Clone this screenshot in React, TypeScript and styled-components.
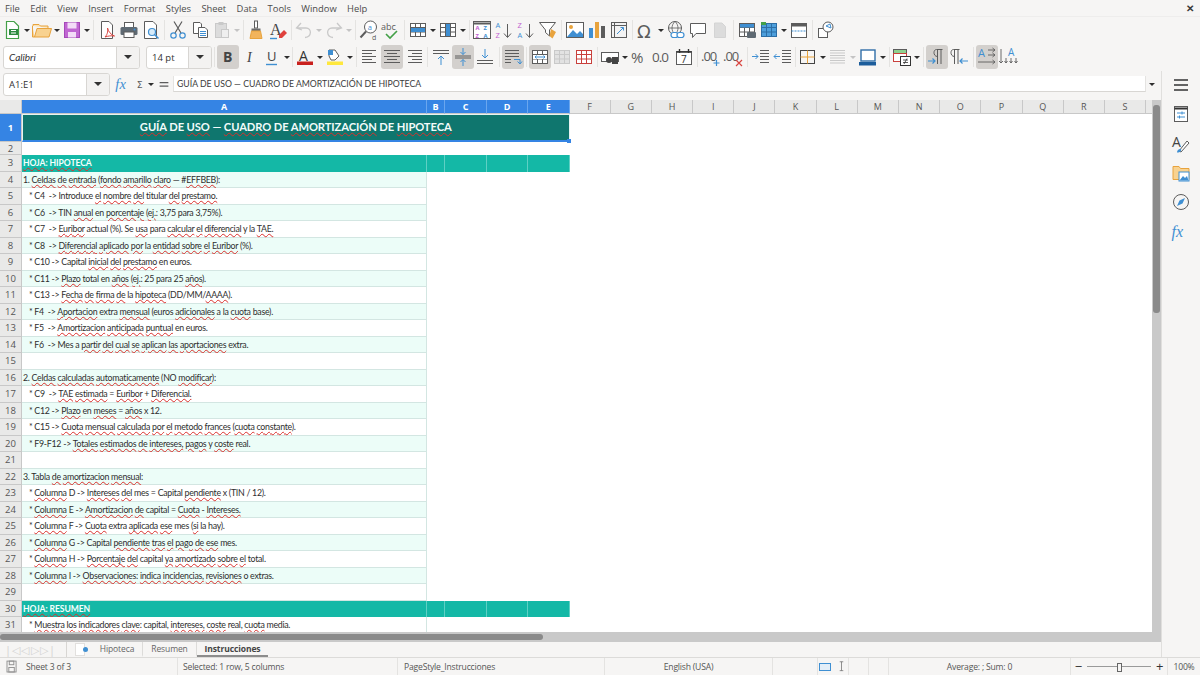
import { FC, ReactNode } from "react";
import styled, { createGlobalStyle } from "styled-components";

const BLUE = "#3f8fd2";
const ORANGE = "#e8a33d";
const GREY = "#5c5c5c";
const FADE = "#c9c9c9";

const lines = (x1: number, x2: number, ys: number[], color = GREY) =>
  ys.map((y) => <path key={y} d={`M${x1} ${y}H${x2}`} stroke={color} />);

const Table: FC<{ fill?: string; stroke?: string }> = ({ fill = "#fff", stroke = GREY }) => (
  <g stroke={stroke} fill="none">
    <rect x="3.5" y="4.5" width="15" height="13" fill={fill} />
    <path d="M3.5 8.5H18.5M3.5 13H18.5M8.5 4.5V17.5M13.5 4.5V17.5" />
  </g>
);

const Pilcrow: FC<{ x: number }> = ({ x }) => (
  <g fill="none" stroke={GREY}>
    <path d={`M${x + 3.5} 3.5V18M${x + 7} 3.5V18M${x + 8.5} 3.5H${x + 2.5}C${x - 1} 3.5 ${x - 1} 10.5 ${x + 3.5} 10.5`} />
  </g>
);

const icons: Record<string, ReactNode> = {
  new: (
    <g>
      <path d="M5.5 2.5H13L17.5 7V19.5H5.5Z" fill="#fff" stroke="#43a047" strokeWidth="1.2" />
      <rect x="8" y="10" width="9" height="6" fill="#2e8b40" />
      <path d="M10 11.5h5M10 14h5" stroke="#fff" />
    </g>
  ),
  open: (
    <g>
      <path d="M1.5 7V18H18L20.5 9.5H6L3.5 18" fill="#f8d290" stroke={ORANGE} />
      <path d="M2 7V5.5H8L9.5 7H17V9" fill="#fbe3b5" stroke={ORANGE} />
    </g>
  ),
  save: (
    <g>
      <rect x="3.5" y="3.5" width="15" height="15" fill="#c066d2" stroke="#a548b8" />
      <rect x="6.5" y="3.5" width="9" height="6" fill="#f3dcf7" />
      <rect x="7" y="13" width="8" height="5.5" fill="#f3dcf7" />
    </g>
  ),
  pdf: (
    <g>
      <path d="M5.5 2.5H13L16.5 6V19.5H5.5Z" fill="#fff" stroke={GREY} />
      <path d="M9 18C12 15 12 11 11.5 9C12 12 15 16 18.5 17C15 16.5 12 17 9 18Z" fill="#fff" stroke="#d9443f" />
    </g>
  ),
  print: (
    <g>
      <rect x="6.5" y="3.5" width="9" height="5" fill="#fff" stroke={GREY} />
      <rect x="2.5" y="8" width="17" height="8" rx="1.5" fill="#5f6a73" />
      <rect x="6" y="13" width="10" height="5.5" fill="#fff" stroke={GREY} />
      <circle cx="16.5" cy="10.5" r="1" fill={BLUE} />
    </g>
  ),
  preview: (
    <g>
      <path d="M4.5 2.5H13L16.5 6V19.5H4.5Z" fill="#fff" stroke={GREY} />
      <circle cx="12" cy="13" r="3.5" fill="#d8ecfa" stroke={BLUE} strokeWidth="1.2" />
      <path d="M14.5 15.5L18.5 19.5" stroke={BLUE} strokeWidth="1.6" />
    </g>
  ),
  cut: (
    <g fill="none">
      <path d="M7 2.5L14 14M15 2.5L8 14" stroke={GREY} strokeWidth="1.2" />
      <circle cx="6.5" cy="16.5" r="2.7" stroke={BLUE} strokeWidth="1.2" />
      <circle cx="15.5" cy="16.5" r="2.7" stroke={BLUE} strokeWidth="1.2" />
    </g>
  ),
  copy: (
    <g>
      <path d="M4.5 3.5H11L12.5 5V14.5H4.5Z" fill="#fff" stroke={GREY} />
      <path d="M9.5 8.5H16L18.5 11V18.5H9.5Z" fill="#fff" stroke={GREY} />
      {lines(11, 17, [12.5, 14.5, 16.5], BLUE)}
    </g>
  ),
  paste: (
    <g>
      <rect x="4.5" y="4.5" width="11" height="14" fill="#dcdcdc" stroke={FADE} />
      <rect x="7.5" y="3" width="5" height="3" fill={FADE} />
      <rect x="10.5" y="10.5" width="7" height="8" fill="#efefef" stroke={FADE} />
    </g>
  ),
  clone: (
    <g>
      <rect x="9.5" y="2" width="3" height="7" fill="#fff" stroke={GREY} />
      <path d="M6.5 9.5H15.5V12H6.5Z" fill="#6d6d6d" />
      <path d="M6.5 12H15.5L17 19.5H5Z" fill="#f2b45c" stroke={ORANGE} />
    </g>
  ),
  clear: (
    <g>
      <text x="3" y="16" fontSize="16" fontFamily="'Liberation Serif', serif" fill="#444">
        A
      </text>
      <path d="M3 19.5H10" stroke={BLUE} strokeWidth="1.4" />
      <path d="M12 16L17 11L20 14L15 19H12Z" fill="#e0413c" />
    </g>
  ),
  undo: <path d="M8 4L3.5 9L9 11M4 9H13C19 9 19 18 12 18.5" fill="none" stroke={FADE} strokeWidth="1.3" />,
  redo: <path d="M14 4L18.5 9L13 11M18 9H9C3 9 3 18 10 18.5" fill="none" stroke={FADE} strokeWidth="1.3" />,
  find: (
    <g>
      <circle cx="12.5" cy="8" r="6" fill="#fff" stroke={GREY} />
      <path d="M8 12.5L2.5 18.5" stroke={GREY} strokeWidth="2" />
      <text x="9.7" y="10.5" fontSize="7.5" fontFamily="'Open Sans', sans-serif" fill={BLUE}>
        a
      </text>
      <text x="14" y="20.5" fontSize="7" fontFamily="'Open Sans', sans-serif" fill={GREY}>
        d
      </text>
    </g>
  ),
  spell: (
    <g>
      <text x="1" y="10.5" fontSize="9" fontFamily="'Open Sans', sans-serif" fill={GREY}>
        abc
      </text>
      <path d="M6 15L10 19L17 12" fill="none" stroke="#43a047" strokeWidth="1.6" />
    </g>
  ),
  rows: (
    <g>
      <Table fill="#fff" />
      <rect x="4" y="9" width="14" height="4" fill={BLUE} />
    </g>
  ),
  cols: (
    <g>
      <Table fill="#fff" />
      <rect x="9" y="5" width="4" height="12" fill={BLUE} />
    </g>
  ),
  sort: (
    <g fontSize="5.8" fontWeight="700" fontFamily="'Open Sans', sans-serif">
      <rect x="2.5" y="2.5" width="17" height="17" fill="#fff" stroke={GREY} />
      <path d="M2.5 4.5H19.5" stroke={GREY} strokeWidth="2" />
      <text x="4.5" y="11" fill="#c060d0">
        A
      </text>
      <text x="12.5" y="11" fill={BLUE}>
        Z
      </text>
      <text x="4.5" y="18.5" fill="#c060d0">
        Z
      </text>
      <text x="12.5" y="18.5" fill={BLUE}>
        A
      </text>
    </g>
  ),
  asc: (
    <g fontSize="7.5" fontFamily="'Open Sans', sans-serif">
      <text x="2.5" y="9" fill={BLUE}>
        A
      </text>
      <text x="2.5" y="19" fill="#c060d0">
        Z
      </text>
      <path d="M14.5 5V18M11 14.5L14.5 18.5L18 14.5" fill="none" stroke={GREY} />
    </g>
  ),
  desc: (
    <g fontSize="7.5" fontFamily="'Open Sans', sans-serif">
      <text x="2.5" y="9" fill="#c060d0">
        Z
      </text>
      <text x="2.5" y="19" fill={BLUE}>
        A
      </text>
      <path d="M14.5 5V18M11 14.5L14.5 18.5L18 14.5" fill="none" stroke={GREY} />
    </g>
  ),
  filter: (
    <g>
      <path d="M2.5 3.5H18.5L12.5 11V17L8.5 13.5V11Z" fill="#fff" stroke={GREY} />
      <path d="M14 10L19 13L15.5 19.5L12.5 17Z" fill={ORANGE} />
    </g>
  ),
  image: (
    <g>
      <rect x="2.5" y="3.5" width="17" height="15" fill="#fff" stroke={GREY} />
      <circle cx="7" cy="8" r="2" fill={ORANGE} />
      <path d="M3 18L9 11L13 15L16 12L19 15V18Z" fill={BLUE} />
    </g>
  ),
  chart: (
    <g>
      <rect x="3" y="9" width="4" height="10" fill={BLUE} />
      <rect x="9" y="3" width="4" height="16" fill={ORANGE} />
      <rect x="15" y="7" width="4" height="12" fill={GREY} />
    </g>
  ),
  pivot: (
    <g>
      <rect x="3.5" y="3.5" width="15" height="15" fill="#f3f3f3" stroke={GREY} />
      <path d="M3.5 6.5H18.5M6.5 3.5V18.5" stroke={GREY} />
      <path d="M9 15L15 9M12.5 8.5H15.5V11.5" fill="none" stroke={BLUE} />
    </g>
  ),
  omega: (
    <text x="2" y="18.5" fontSize="18" fontFamily="'DejaVu Sans', sans-serif" fill={GREY}>
      Ω
    </text>
  ),
  link: (
    <g fill="none">
      <circle cx="10" cy="9" r="6.5" stroke={GREY} />
      <path d="M3.5 9H16.5M10 2.5C6 6 6 12 10 15.5M10 2.5C14 6 14 12 10 15.5" stroke={GREY} strokeWidth=".8" />
      <rect x="6" y="13.5" width="7" height="5" rx="2.5" fill="#fff" stroke={BLUE} strokeWidth="1.2" />
      <rect x="12" y="13.5" width="7" height="5" rx="2.5" fill="#fff" stroke={BLUE} strokeWidth="1.2" />
    </g>
  ),
  comment: <path d="M3.5 4.5H18.5V14.5H9L5.5 18.5V14.5H3.5Z" fill="#fff" stroke={GREY} />,
  note: <path d="M5.5 4H13L16.5 7.5V18.5H5.5Z" fill="#dcdcdc" stroke="#d4d4d4" />,
  printarea: (
    <g>
      <Table fill="#fff" />
      <rect x="4" y="5" width="14" height="3.5" fill={BLUE} />
      <rect x="11" y="13" width="9" height="6" rx="1" fill="#5f6a73" />
    </g>
  ),
  freeze: (
    <g>
      <Table fill="#4d9fdc" stroke="#2d6ea5" />
      <rect x="3" y="3" width="5" height="3" fill="#43a047" />
    </g>
  ),
  split: (
    <g>
      <rect x="3.5" y="4.5" width="15" height="14" fill="#fff" stroke={GREY} />
      <rect x="3.5" y="4.5" width="15" height="3" fill={GREY} />
      <path d="M3.5 12H18.5" stroke={BLUE} strokeDasharray="2 1" />
    </g>
  ),
  shapes: (
    <g fill="#fff" stroke={GREY}>
      <rect x="3.5" y="9.5" width="9" height="9" />
      <circle cx="13" cy="8" r="5" />
      <path d="M11 7L15 5L16 9Z" stroke={BLUE} />
    </g>
  ),
  bold: (
    <text x="6" y="16" fontSize="14" fontWeight="700" fontFamily="'Open Sans', sans-serif" fill="#444">
      B
    </text>
  ),
  italic: (
    <text x="8" y="16" fontSize="14" fontStyle="italic" fontFamily="'Liberation Serif', serif" fill="#444">
      I
    </text>
  ),
  under: (
    <g>
      <text x="6" y="15" fontSize="13" fontFamily="'Open Sans', sans-serif" fill="#444">
        U
      </text>
      <path d="M5 18.5H16" stroke={BLUE} strokeWidth="1.4" />
    </g>
  ),
  color: (
    <g>
      <text x="5" y="14.5" fontSize="14" fontFamily="'Open Sans', sans-serif" fill="#333">
        A
      </text>
      <rect x="3" y="15.5" width="16" height="3.5" fill="#c9211e" />
    </g>
  ),
  bg: (
    <g>
      <path d="M5 4H11L15 10L11 14H7L5 10Z" fill="#fff" stroke={GREY} />
      <rect x="4" y="4" width="5" height="5" fill={BLUE} />
      <rect x="3" y="15.5" width="16" height="3.5" fill="#ffe83d" />
    </g>
  ),
  left: <g>{[4.5, 7.5, 10.5, 13.5, 16.5].map((y, i) => <path key={y} d={i % 2 ? `M3 ${y}H13` : `M3 ${y}H17`} stroke={GREY} />)}</g>,
  center: <g>{[4.5, 7.5, 10.5, 13.5, 16.5].map((y, i) => <path key={y} d={i % 2 ? `M6 ${y}H16` : `M3 ${y}H19`} stroke={GREY} />)}</g>,
  right: <g>{[4.5, 7.5, 10.5, 13.5, 16.5].map((y, i) => <path key={y} d={i % 2 ? `M9 ${y}H19` : `M5 ${y}H19`} stroke={GREY} />)}</g>,
  top: (
    <g>
      {lines(3, 19, [4.5, 7.5])}
      <path d="M11 19V10M8 13L11 10L14 13" fill="none" stroke={BLUE} />
    </g>
  ),
  middle: (
    <g>
      {lines(3, 19, [10, 12])}
      <path d="M11 2V8.5M8.5 6L11 8.5L13.5 6M11 20V13.5M8.5 16L11 13.5L13.5 16" fill="none" stroke={BLUE} />
    </g>
  ),
  bottom: (
    <g>
      {lines(3, 19, [14.5, 17.5])}
      <path d="M11 3V12M8 9L11 12L14 9" fill="none" stroke={BLUE} />
    </g>
  ),
  wrap: (
    <g>
      {lines(3, 17, [4.5, 7.5, 10.5])}
      {lines(3, 9, [13.5, 16.5])}
      <path d="M12 13.5H18V17.5M15.5 15.5L18 18L20 15.5" fill="none" stroke={BLUE} />
    </g>
  ),
  merge: (
    <g>
      <Table fill="#fff" />
      <rect x="4" y="9" width="14" height="4" fill="#fff" />
      <path d="M6 11H16M7.5 9.5L6 11L7.5 12.5M14.5 9.5L16 11L14.5 12.5" fill="none" stroke={BLUE} />
    </g>
  ),
  mergeoff: <Table fill="#e2e2e2" stroke={FADE} />,
  unmerge: <Table fill="#fff" stroke="#c9403c" />,
  format: (
    <g>
      <rect x="2.5" y="6.5" width="17" height="9" fill="#fff" stroke={GREY} />
      <circle cx="10" cy="14" r="3" fill="#444" />
      <rect x="13" y="11" width="6" height="7" fill="#444" />
    </g>
  ),
  percent: (
    <text x="2" y="17" fontSize="15" fontFamily="'Open Sans', sans-serif" fill={GREY}>
      %
    </text>
  ),
  number: (
    <text x="1" y="16" fontSize="13.5" letterSpacing="-1" fontFamily="'Open Sans', sans-serif" fill={GREY}>
      0.0
    </text>
  ),
  date: (
    <g>
      <rect x="3.5" y="5.5" width="15" height="13" fill="#fff" stroke={GREY} />
      <path d="M3.5 6H18.5M6.5 3V7M15.5 3V7" stroke="#333" strokeWidth="1.4" />
      <text x="8" y="16.5" fontSize="10" fontFamily="'Open Sans', sans-serif" fill="#333">
        7
      </text>
    </g>
  ),
  adddec: (
    <g>
      <text x="1" y="15" fontSize="13" letterSpacing="-1" fontFamily="'Open Sans', sans-serif" fill={GREY}>
        .00
      </text>
      <path d="M16.5 14V20M13.5 17H19.5" stroke={BLUE} strokeWidth="1.2" />
    </g>
  ),
  deldec: (
    <g>
      <text x="1" y="15" fontSize="13" letterSpacing="-1" fontFamily="'Open Sans', sans-serif" fill={GREY}>
        .00
      </text>
      <path d="M14 14L20 20M20 14L14 20" stroke="#d9443f" strokeWidth="1.2" />
    </g>
  ),
  indent: (
    <g>
      {lines(10, 19, [4.5, 7.5, 10.5, 13.5, 16.5])}
      <path d="M2 10.5H8M5.5 8L8 10.5L5.5 13" fill="none" stroke={BLUE} />
    </g>
  ),
  outdent: (
    <g>
      {lines(10, 19, [4.5, 7.5, 10.5, 13.5, 16.5])}
      <path d="M8 10.5H2M4.5 8L2 10.5L4.5 13" fill="none" stroke={BLUE} />
    </g>
  ),
  border: (
    <g fill="none">
      <rect x="3.5" y="4.5" width="14" height="13" stroke="#444" />
      <path d="M10.5 4.5V17.5M3.5 11H17.5" stroke={ORANGE} />
    </g>
  ),
  bstyle: <g>{lines(3, 18, [4.5, 7, 9.5, 12, 14.5, 17], FADE)}</g>,
  bcolor: (
    <g>
      <rect x="4" y="4" width="14" height="11" fill="#fff" stroke="#2f6ea8" strokeWidth="1.4" />
      <rect x="2" y="16" width="17" height="3.5" fill="#1c5d9b" />
    </g>
  ),
  cond: (
    <g>
      <rect x="2.5" y="3.5" width="13" height="4" fill="#8fd18f" stroke={GREY} />
      <rect x="2.5" y="7.5" width="13" height="8" fill="#fff" stroke="#c9403c" />
      <rect x="9.5" y="10.5" width="10" height="9" fill="#fff" stroke="#333" />
      <path d="M12 14H17M12 16.5H17M13 18L16 12.5" stroke="#333" strokeWidth=".8" />
    </g>
  ),
  ltr: (
    <g>
      <Pilcrow x={8} />
      <path d="M2 15H9M6.5 12.5L9 15L6.5 17.5" fill="none" stroke={BLUE} strokeWidth="1.2" />
    </g>
  ),
  rtl: (
    <g>
      <Pilcrow x={3} />
      <path d="M12 15H20M14.5 12.5L12 15L14.5 17.5" fill="none" stroke={BLUE} strokeWidth="1.2" />
    </g>
  ),
  ahoriz: (
    <g>
      <text x="2" y="11" fontSize="11" fontFamily="'Open Sans', sans-serif" fill={BLUE}>
        A
      </text>
      <path d="M12 4H19M16.5 2L19 4L16.5 6M12 9H19M16.5 7L19 9L16.5 11M2 16H19M16.5 14L19 16L16.5 18" fill="none" stroke={GREY} strokeWidth=".9" />
    </g>
  ),
  avert: (
    <g>
      <text x="10" y="10" fontSize="10" fontFamily="'Open Sans', sans-serif" fill={BLUE}>
        A
      </text>
      <path d="M3 3V17M1 15L3 17L5 15M8 12V17M6.5 15L8 17L9.5 15M13 12V17M11.5 15L13 17L14.5 15M18 12V17M16.5 15L18 17L19.5 15" fill="none" stroke={GREY} strokeWidth=".9" />
    </g>
  ),
  fx: (
    <text x="1.5" y="17" fontSize="16" fontStyle="italic" fontFamily="'Liberation Serif', serif" fill={BLUE}>
      fx
    </text>
  ),
  sigma: (
    <text x="3" y="17.5" fontSize="17" fontFamily="'DejaVu Sans', sans-serif" fill={GREY}>
      Σ
    </text>
  ),
  equal: <path d="M5 9H17M5 14H17" stroke={GREY} strokeWidth="1.6" />,
  menu: <path d="M4 6H18M4 11H18M4 16H18" stroke="#333" strokeWidth="1.5" />,
  props: (
    <g>
      <rect x="4.5" y="3.5" width="13" height="15" fill="#fff" stroke={GREY} />
      <path d="M4.5 5.5H17.5" stroke="#333" strokeWidth="2" />
      <path d="M7 10H15M7 14H15M12 8.5V11.5M9.5 12.5V15.5" stroke={BLUE} />
    </g>
  ),
  styles: (
    <g>
      <text x="2" y="14" fontSize="14" fontFamily="'Open Sans', sans-serif" fill="#444">
        A
      </text>
      <path d="M9 18L17 8L19 10L11 19Z" fill="#fff" stroke={GREY} />
      <path d="M7 19.5C7 17 9 15.5 11 16C12 18 9 20 7 19.5Z" fill={BLUE} />
    </g>
  ),
  gallery: (
    <g>
      <path d="M3 4.5H9L10.5 6.5H19V17.5H3Z" fill="#f8d290" stroke={ORANGE} />
      <rect x="9" y="10" width="10" height="9" fill="#fff" stroke={BLUE} />
      <path d="M9.5 18.5L13 14L15 16L17 14L18.5 18.5Z" fill={BLUE} />
    </g>
  ),
  nav: (
    <g fill="none">
      <circle cx="11" cy="11" r="7.5" stroke={GREY} />
      <path d="M15 7L12.5 12.5L7 15L9.5 9.5Z" fill={BLUE} />
    </g>
  ),
  floppy: (
    <g fill="none" stroke="#8d8d8d">
      <rect x="5.5" y="4.5" width="10" height="12" />
      <rect x="8" y="4.5" width="5" height="4" />
      <rect x="7.5" y="11.5" width="6" height="5" />
    </g>
  ),
  cursor: <path d="M8 3H14M11 3V18M8 18H14" fill="none" stroke="#666" strokeWidth="1.2" />,
};

const Icon: FC<{ name: string; size?: number }> = ({ name, size = 22 }) => (
  <svg width={size} height={size} viewBox="0 0 22 22">
    {icons[name]}
  </svg>
);

const GlobalStyle = createGlobalStyle`
  html, body {
    margin: 0;
    padding: 0;
    background: #f6f5f4;
    overflow: hidden;
  }
  * {
    box-sizing: border-box;
  }
`;

const Window = styled.div`
  width: 1200px;
  height: 675px;
  display: flex;
  flex-direction: column;
  overflow: hidden;
  background: #f6f5f4;
  color: #4a4a4a;
  font-family: "Open Sans", "Noto Sans", sans-serif;
  font-size: 10px;
`;

const MenuBar = styled.div`
  height: 17px;
  display: flex;
  align-items: center;
  padding-left: 5px;
  gap: 10.4px;
  font-size: 9.4px;
  color: #4c4c4c;
  border-bottom: 1px solid #eeedec;
`;

const CloseX = styled.span`
  margin-left: auto;
  margin-right: 6px;
  font-size: 10px;
  font-weight: 700;
  color: #3a3a3a;
`;

const ToolRow = styled.div<{ $height: number; $left: number }>`
  height: ${(p) => p.$height}px;
  padding-left: ${(p) => p.$left}px;
  display: flex;
  align-items: center;
`;

const ToolButton = styled.div<{ $pressed?: boolean; $width?: number }>`
  width: ${(p) => p.$width ?? 22}px;
  height: 24px;
  flex: none;
  display: flex;
  align-items: center;
  justify-content: center;
  border-radius: 3px;
  background: ${(p) => (p.$pressed ? "#d3d0cd" : "transparent")};
`;

const Caret = styled.div<{ $faded?: boolean; $width?: number }>`
  width: ${(p) => p.$width ?? 8}px;
  flex: none;
  display: flex;
  justify-content: center;
  &::after {
    content: "";
    border-left: 3px solid transparent;
    border-right: 3px solid transparent;
    border-top: 3px solid ${(p) => (p.$faded ? "#c4c4c4" : "#2e2e2e")};
  }
`;

const Sep = styled.div<{ $width: number }>`
  width: ${(p) => p.$width}px;
  height: 20px;
  flex: none;
  display: flex;
  justify-content: center;
  &::after {
    content: "";
    width: 1px;
    background: #e4e3e1;
  }
`;

const Combo = styled.div<{ $width: number; $gap: number }>`
  width: ${(p) => p.$width}px;
  height: 23px;
  flex: none;
  margin-right: ${(p) => p.$gap}px;
  display: flex;
  background: #fff;
  border: 1px solid #d8d6d3;
  border-radius: 3px;
  overflow: hidden;
`;

const ComboText = styled.div<{ $italic?: boolean }>`
  flex: 1;
  display: flex;
  align-items: center;
  padding-left: 5px;
  font-family: ${(p) => (p.$italic ? "Lato" : "Open Sans")}, sans-serif;
  font-style: ${(p) => (p.$italic ? "italic" : "normal")};
  font-size: ${(p) => (p.$italic ? 10 : 9.5)}px;
  color: #333;
`;

const ComboArrow = styled.div`
  width: 23px;
  flex: none;
  display: flex;
  align-items: center;
  justify-content: center;
  background: #f3f2f1;
  border-left: 1px solid #d8d6d3;
  &::after {
    content: "";
    border-left: 4px solid transparent;
    border-right: 4px solid transparent;
    border-top: 4px solid #333;
  }
`;

const Workspace = styled.div`
  flex: 1;
  min-height: 0;
  display: flex;
`;

const MainColumn = styled.div`
  flex: 1;
  min-width: 0;
  display: flex;
  flex-direction: column;
`;

const FormulaBar = styled.div`
  height: 29px;
  flex: none;
  display: flex;
  align-items: center;
  padding: 0 3px 3px;
`;

const FormulaInput = styled.div`
  flex: 1;
  height: 16px;
  padding-left: 3px;
  display: flex;
  align-items: center;
  background: #fff;
  border-bottom: 1px solid #d8d6d3;
  border-left: 1px solid #e4e3e1;
  border-right: 1px solid #e4e3e1;
  font-family: Lato, sans-serif;
  font-size: 8.7px;
  color: #3c3c3c;
  white-space: nowrap;
`;

const GridArea = styled.div`
  flex: 1;
  min-height: 0;
  display: flex;
`;

const Sheet = styled.div`
  flex: 1;
  min-width: 0;
  overflow: hidden;
  background: #fff;
`;

const Row = styled.div<{ $height: number }>`
  height: ${(p) => p.$height}px;
  display: flex;
`;

const ColCell = styled.div<{ $width: number; $active?: boolean }>`
  width: ${(p) => p.$width}px;
  flex: none;
  display: flex;
  align-items: center;
  justify-content: center;
  font-size: 9px;
  font-weight: ${(p) => (p.$active ? 700 : 400)};
  color: ${(p) => (p.$active ? "#fff" : "#555")};
  background: ${(p) => (p.$active ? "#3584e4" : "#e9e9e8")};
  border-right: 1px solid ${(p) => (p.$active ? "#6aa6ee" : "#c8c8c8")};
  border-bottom: 1px solid #c8c8c8;
`;

const RowHead = styled.div<{ $active?: boolean }>`
  width: 22px;
  flex: none;
  display: flex;
  align-items: center;
  justify-content: center;
  font-size: 9.5px;
  font-weight: ${(p) => (p.$active ? 700 : 400)};
  color: ${(p) => (p.$active ? "#fff" : "#555")};
  background: ${(p) => (p.$active ? "#3584e4" : "#e9e9e8")};
  border-bottom: 1px solid #c8c8c8;
  border-right: 1px solid #c8c8c8;
`;

const TitleCell = styled.div`
  position: relative;
  width: 547.5px;
  flex: none;
  padding-bottom: 2px;
  display: flex;
  align-items: center;
  justify-content: center;
  background: #0f766e;
  border: 1px solid #e8f3f2;
  border-bottom: 2px solid #3584e4;
  font-family: Lato, sans-serif;
  font-weight: 700;
  font-size: 11.2px;
  letter-spacing: -0.1px;
  color: #f2fbfa;
`;

const Handle = styled.span`
  position: absolute;
  right: -2px;
  bottom: -3px;
  width: 4px;
  height: 4px;
  background: #3584e4;
`;

const BandCell = styled.div<{ $width: number }>`
  width: ${(p) => p.$width}px;
  flex: none;
  padding-left: 1px;
  display: flex;
  align-items: center;
  background: #14b8a6;
  border-right: 1px solid #5fd0c4;
  font-family: Lato, sans-serif;
  font-weight: 700;
  font-size: 8.6px;
  letter-spacing: -0.1px;
  color: #f4fffd;
  white-space: pre;
`;

const TextCell = styled.div<{ $tint: boolean }>`
  width: 405px;
  flex: none;
  padding-left: 1px;
  display: flex;
  align-items: center;
  background: ${(p) => (p.$tint ? "#ecfdf8" : "#fff")};
  border-bottom: 1px solid #d3e6e2;
  border-right: 1px solid #d3e6e2;
  font-family: Lato, sans-serif;
  font-size: 8.8px;
  letter-spacing: -0.28px;
  color: #2e2e2e;
  white-space: pre;
`;

const Spell = styled.span`
  text-decoration: underline wavy #d9302c;
  text-decoration-thickness: 0.7px;
  text-underline-offset: 0.5px;
`;

const VScroll = styled.div`
  width: 9px;
  flex: none;
  padding: 5px 1px 0;
  background: #c9c9c9;
`;

const VThumb = styled.div`
  height: 208px;
  background: #8a8a8a;
  border-radius: 3px;
`;

const HScroll = styled.div`
  height: 10px;
  flex: none;
  padding: 2px 0;
  background: #c9c9c9;
`;

const HThumb = styled.div`
  width: 543px;
  height: 6px;
  background: #8a8a8a;
  border-radius: 3px;
`;

const TabBar = styled.div`
  height: 15px;
  flex: none;
  display: flex;
  align-items: center;
  font-size: 8.5px;
  letter-spacing: -0.1px;
  color: #666;
`;

const NavArrows = styled.div`
  width: 62px;
  margin-left: 5px;
  flex: none;
  font-size: 11px;
  letter-spacing: 1.2px;
  white-space: nowrap;
  overflow: hidden;
  color: #d2d2d2;
  border-right: 1px solid #d8d6d3;
`;

const NewTab = styled.div`
  position: relative;
  width: 10px;
  height: 13px;
  margin: 0 7px 0 8px;
  flex: none;
  background: #fff;
  border: 1px solid #e2e0de;
  &::after {
    content: "";
    position: absolute;
    right: -4px;
    top: 3px;
    width: 5px;
    height: 5px;
    border-radius: 50%;
    background: ${BLUE};
  }
`;

const SheetTab = styled.div<{ $active?: boolean; $width: number; $divider?: boolean }>`
  width: ${(p) => p.$width}px;
  height: 15px;
  flex: none;
  display: flex;
  align-items: center;
  justify-content: center;
  font-weight: ${(p) => (p.$active ? 700 : 400)};
  color: ${(p) => (p.$active ? "#444" : "#666")};
  border-bottom: 2px solid ${(p) => (p.$active ? "#8c8c8c" : "transparent")};
  border-right: ${(p) => (p.$divider ? "1px solid #dcdbd9" : "none")};
`;

const Sidebar = styled.div`
  width: 39px;
  flex: none;
  padding-top: 3px;
  display: flex;
  flex-direction: column;
  align-items: center;
  gap: 7.3px;
  border-left: 1px solid #e0dfdd;
`;

const StatusBar = styled.div`
  height: 18px;
  flex: none;
  display: flex;
  align-items: center;
  font-size: 8.6px;
  letter-spacing: -0.2px;
  color: #555;
  border-top: 1px solid #dcdbd9;
`;

const StatusItem = styled.div<{ $width: number; $center?: boolean; $left?: number; $bare?: boolean }>`
  width: ${(p) => p.$width}px;
  height: 100%;
  flex: none;
  display: flex;
  align-items: center;
  gap: 4px;
  padding-left: ${(p) => p.$left ?? 0}px;
  justify-content: ${(p) => (p.$center ? "center" : "flex-start")};
  border-right: ${(p) => (p.$bare ? "none" : "1px solid #e4e3e1")};
  white-space: nowrap;
`;

const SelectMode = styled.span`
  width: 12px;
  height: 8px;
  background: #e3eef8;
  border: 1px solid ${BLUE};
`;

const ZoomTrack = styled.div`
  position: relative;
  width: 64px;
  height: 1px;
  margin: 0 1px;
  background: #9a9a9a;
  &::after {
    content: "";
    position: absolute;
    left: 30px;
    top: -3px;
    width: 3px;
    height: 7px;
    background: #f6f5f4;
    border: 1px solid #666;
  }
`;

const ZoomSign = styled.span`
  font-size: 13px;
  line-height: 1;
  color: #333;
`;

const renderTools = (items: string[]) =>
  items.map((item, i) => {
    if (item === "v") return <Caret key={i} />;
    if (item === "v-") return <Caret key={i} $faded />;
    if (item[0] === "|") return <Sep key={i} $width={Number(item.slice(1))} />;
    const pressed = item[0] === "*";
    return (
      <ToolButton key={i} $pressed={pressed}>
        <Icon name={pressed ? item.slice(1) : item} />
      </ToolButton>
    );
  });

const standardTools =
  "new v open v save v |5 pdf print preview |5 cut copy paste v- |4 clone clear |4 undo v- redo v- |5 find spell |5 rows v cols v |4 sort asc desc filter |5 image chart pivot |5 omega v link comment note |5 printarea freeze v split |5 shapes".split(" ");

const formatTools =
  "|5 *bold italic under v |3 color v bg v |5 left *center right |5 top *middle bottom |6 *wrap |5 *merge mergeoff unmerge |4 format v percent number date |5 adddec deldec |6 indent outdent |3 border v bstyle v- bcolor v |4 cond v |5 *ltr rtl |6 *ahoriz avert".split(" ");

// {word} marks a word with the red spell-check underline
const Marked: FC<{ text: string }> = ({ text }) => (
  <span>
    {text.split(/(\{[^}]*\})/).map((part, i) =>
      part[0] === "{" ? <Spell key={i}>{part.slice(1, -1)}</Spell> : part
    )}
  </span>
);

const rows: Record<number, string> = {
  4: "1. {Celdas} {de} {entrada} ({fondo} {amarillo} {claro} — #{EFFBEB}):",
  5: "   * C4  -> Introduce {el} {nombre} {del} titular {del} {prestamo.}",
  6: "   * C6  -> TIN {anual} en {porcentaje} ({ej.}: 3,75 para 3,75%).",
  7: "   * C7  -> {Euribor} actual (%). Se {usa} para {calcular} {el} {diferencial} y la {TAE.}",
  8: "   * C8  -> {Diferencial} {aplicado} {por} la {entidad} {sobre} {el} {Euribor} (%).",
  9: "   * C10 -> Capital {inicial} {del} {prestamo} en euros.",
  10: "   * C11 -> {Plazo} total en {años} ({ej.}: 25 para 25 {años}).",
  11: "   * C13 -> {Fecha} {de} {firma} {de} la {hipoteca} (DD/MM/{AAAA}).",
  12: "   * F4  -> {Aportacion} extra {mensual} (euros {adicionales} a la {cuota} base).",
  13: "   * F5  -> {Amortizacion} {anticipada} {puntual} en euros.",
  14: "   * F6  -> Mes a {partir} {del} {cual} {se} {aplican} {las} {aportaciones} extra.",
  15: "",
  16: "2. {Celdas} {calculadas} {automaticamente} (NO {modificar}):",
  17: "   * C9  -> {TAE} {estimada} = {Euribor} + {Diferencial.}",
  18: "   * C12 -> {Plazo} en {meses} = {años} x 12.",
  19: "   * C15 -> {Cuota} {mensual} {calculada} {por} {el} {metodo} {frances} ({cuota} {constante}).",
  20: "   * F9-F12 -> {Totales} {estimados} {de} {intereses,} {pagos} y {coste} real.",
  21: "",
  22: "3. Tabla {de} {amortizacion} {mensual}:",
  23: "   * {Columna} D -> {Intereses} {del} mes = Capital {pendiente} x (TIN / 12).",
  24: "   * {Columna} E -> {Amortizacion} {de} capital = {Cuota} - {Intereses.}",
  25: "   * {Columna} F -> {Cuota} extra {aplicada} {ese} mes ({si} la hay).",
  26: "   * {Columna} G -> Capital {pendiente} {tras} {el} {pago} {de} {ese} mes.",
  27: "   * {Columna} H -> {Porcentaje} {del} capital {ya} {amortizado} {sobre} {el} total.",
  28: "   * {Columna} I -> {Observaciones}: {indica} {incidencias,} {revisiones} o extras.",
  29: "",
  31: "   * {Muestra} {los} {indicadores} {clave}: capital, {intereses,} {coste} real, {cuota} media.",
};

const bandWidths = [405, 18, 42, 41, 41.5];
const otherCols = "FGHIJKLMNOPQRST".split("");

const Band: FC<{ n: number; text: string }> = ({ n, text }) => (
  <Row $height={16.5}>
    <RowHead>{n}</RowHead>
    {bandWidths.map((w, i) => (
      <BandCell key={i} $width={w}>
        {i === 0 && <Marked text={text} />}
      </BandCell>
    ))}
  </Row>
);

const TextRow: FC<{ n: number }> = ({ n }) => (
  <Row $height={16.5}>
    <RowHead>{n}</RowHead>
    <TextCell $tint={n % 2 === 0 && n !== 29}>
      <Marked text={rows[n]} />
    </TextCell>
  </Row>
);

export default function App() {
  const textRows = (from: number, to: number) =>
    Array.from({ length: to - from + 1 }, (_, i) => <TextRow key={from + i} n={from + i} />);

  return (
    <Window>
      <GlobalStyle />
      <MenuBar>
        {"File Edit View Insert Format Styles Sheet Data Tools Window Help".split(" ").map((m) => (
          <span key={m}>{m}</span>
        ))}
        <CloseX>✕</CloseX>
      </MenuBar>
      <ToolRow $height={26} $left={1}>
        {renderTools(standardTools)}
      </ToolRow>
      <ToolRow $height={28} $left={3}>
        <Combo $width={137} $gap={6}>
          <ComboText $italic>Calibri</ComboText>
          <ComboArrow />
        </Combo>
        <Combo $width={66} $gap={0}>
          <ComboText>14 pt</ComboText>
          <ComboArrow />
        </Combo>
        {renderTools(formatTools)}
      </ToolRow>
      <Workspace>
        <MainColumn>
          <FormulaBar>
            <Combo $width={107} $gap={3}>
              <ComboText>A1:E1</ComboText>
              <ComboArrow />
            </Combo>
            <ToolButton>
              <Icon name="fx" size={20} />
            </ToolButton>
            <ToolButton $width={12}>
              <Icon name="sigma" />
            </ToolButton>
            <Caret />
            <ToolButton $width={18}>
              <Icon name="equal" size={16} />
            </ToolButton>
            <FormulaInput>GUÍA DE USO — CUADRO DE AMORTIZACIÓN DE HIPOTECA</FormulaInput>
            <Caret $width={12} />
          </FormulaBar>
          <GridArea>
            <Sheet>
              <Row $height={14}>
                <ColCell $width={22} />
                <ColCell $width={405} $active>A</ColCell>
                <ColCell $width={18} $active>B</ColCell>
                <ColCell $width={42} $active>C</ColCell>
                <ColCell $width={41} $active>D</ColCell>
                <ColCell $width={41.5} $active>E</ColCell>
                {otherCols.map((c) => (
                  <ColCell key={c} $width={41.2}>
                    {c === "T" ? "" : c}
                  </ColCell>
                ))}
              </Row>
              <Row $height={28}>
                <RowHead $active>1</RowHead>
                <TitleCell>
                  <Marked text="{GUÍA} DE {USO} — {CUADRO} DE {AMORTIZACIÓN} DE {HIPOTECA}" />
                  <Handle />
                </TitleCell>
              </Row>
              <Row $height={13}>
                <RowHead>2</RowHead>
              </Row>
              <Band n={3} text="{HOJA:} {HIPOTECA}" />
              {textRows(4, 29)}
              <Band n={30} text="{HOJA:} {RESUMEN}" />
              <TextRow n={31} />
            </Sheet>
            <VScroll>
              <VThumb />
            </VScroll>
          </GridArea>
          <HScroll>
            <HThumb />
          </HScroll>
          <TabBar>
            <NavArrows>|◁◁▷▷|</NavArrows>
            <NewTab />
            <SheetTab $width={51} $divider>Hipoteca</SheetTab>
            <SheetTab $width={54} $divider>Resumen</SheetTab>
            <SheetTab $width={71} $active>Instrucciones</SheetTab>
          </TabBar>
        </MainColumn>
        <Sidebar>
          <Icon name="menu" />
          <Icon name="props" />
          <Icon name="styles" />
          <Icon name="gallery" />
          <Icon name="nav" />
          <Icon name="fx" />
        </Sidebar>
      </Workspace>
      <StatusBar>
        <StatusItem $width={178} $left={2}>
          <Icon name="floppy" size={20} />
          <span>Sheet 3 of 3</span>
        </StatusItem>
        <StatusItem $width={220} $left={5}>Selected: 1 row, 5 columns</StatusItem>
        <StatusItem $width={207} $left={6}>PageStyle_Instrucciones</StatusItem>
        <StatusItem $width={168} $center>English (USA)</StatusItem>
        <StatusItem $width={45} />
        <StatusItem $width={31} $center>
          <SelectMode />
          <Icon name="cursor" size={13} />
        </StatusItem>
        <StatusItem $width={20} />
        <StatusItem $width={20} />
        <StatusItem $width={182} $center>Average: ; Sum: 0</StatusItem>
        <StatusItem $width={97} $center>
          <ZoomSign>−</ZoomSign>
          <ZoomTrack />
          <ZoomSign>+</ZoomSign>
        </StatusItem>
        <StatusItem $width={32} $center $bare>100%</StatusItem>
      </StatusBar>
    </Window>
  );
}
